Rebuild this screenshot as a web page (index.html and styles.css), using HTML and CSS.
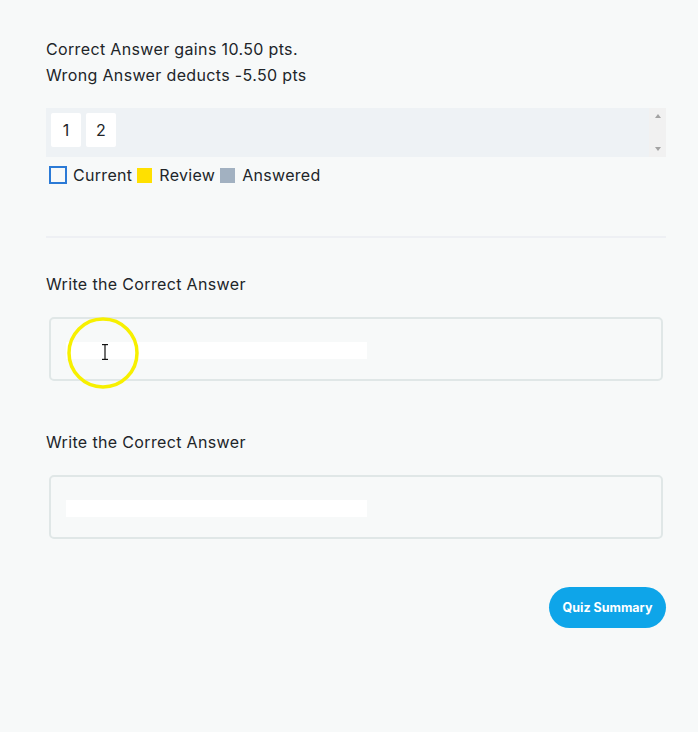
FILE: index.html
```html
<!DOCTYPE html>
<html>
<head>
<meta charset="utf-8">
<link rel="stylesheet" href="styles.css">
</head>
<body>
<div class="page">
  <p class="points">Correct Answer gains 10.50 pts.<br>Wrong Answer deducts -5.50 pts</p>

  <div class="nav-box">
    <div class="nav-items">
      <span class="qnum">1</span>
      <span class="qnum">2</span>
    </div>
    <div class="scrollbar">
      <span class="arrow up"></span>
      <span class="arrow down"></span>
    </div>
  </div>

  <div class="legend">
    <span class="swatch current"></span><span class="legend-label">Current</span>
    <span class="swatch review"></span><span class="legend-label">Review</span>
    <span class="swatch answered"></span><span class="legend-label">Answered</span>
  </div>

  <hr class="divider">

  <div class="question">
    <div class="q-label">Write the Correct Answer</div>
    <div class="answer-box">
      <div class="answer-field"></div>
      <svg class="click-ring" width="76" height="76" viewBox="0 0 76 76">
        <circle cx="38" cy="38" r="34" fill="none" stroke="#f7f000" stroke-width="3.5"/>
        <g stroke="#111" stroke-width="1.2" fill="none">
          <line x1="40" y1="30" x2="40" y2="44"/>
          <line x1="37" y1="29.6" x2="43" y2="29.6"/>
          <line x1="37" y1="44.4" x2="43" y2="44.4"/>
        </g>
      </svg>
    </div>
  </div>

  <div class="question second">
    <div class="q-label">Write the Correct Answer</div>
    <div class="answer-box">
      <div class="answer-field"></div>
    </div>
  </div>

  <div class="actions">
    <button class="summary-btn">Quiz Summary</button>
  </div>
</div>
</body>
</html>
```

FILE: styles.css
```css
html, body {
  margin: 0;
  padding: 0;
  background: #f7f9f9;
}
body {
  font-family: Inter, "Noto Sans", "Liberation Sans", sans-serif;
  font-size: 16px;
  letter-spacing: 0.35px;
  color: #212529;
}
.page {
  width: 620px;
  padding: 36px 0 40px 46px;
}
.points {
  margin: 0;
  line-height: 26px;
}
.nav-box {
  margin-top: 20px;
  height: 49px;
  background: #eef2f5;
  display: flex;
  justify-content: space-between;
}
.nav-items {
  display: flex;
  gap: 5px;
  padding: 5px;
  align-items: flex-start;
}
.qnum {
  width: 30px;
  height: 34px;
  background: #fff;
  border-radius: 2px;
  display: flex;
  align-items: center;
  justify-content: center;
  font-size: 16px;
  letter-spacing: 0;
}
.scrollbar {
  width: 17px;
  background: #f1f1f1;
  display: flex;
  flex-direction: column;
  justify-content: space-between;
  align-items: center;
  padding: 6px 0;
}
.arrow {
  width: 0;
  height: 0;
  border-left: 3.5px solid transparent;
  border-right: 3.5px solid transparent;
}
.arrow.up {
  border-bottom: 4px solid #a3a3a3;
}
.arrow.down {
  border-top: 4px solid #a3a3a3;
}
.legend {
  margin-top: 8px;
  display: flex;
  align-items: center;
  height: 20px;
  line-height: 20px;
  padding-left: 3px;
}
.legend-label {
  letter-spacing: 0.3px;
}
.swatch {
  box-sizing: border-box;
  display: inline-block;
  flex: none;
}
.swatch.current {
  width: 18px;
  height: 18px;
  border: 2px solid #2b7ad6;
  margin-right: 6px;
}
.swatch.review {
  width: 15px;
  height: 15px;
  background: #ffe000;
  margin-left: 5px;
  margin-right: 7px;
}
.swatch.answered {
  width: 15px;
  height: 15px;
  background: #a2b1c1;
  margin-left: 5px;
  margin-right: 7px;
}
.divider {
  margin: 51px 0 0 0;
  border: 0;
  height: 2px;
  background: #eef0f4;
}
.question {
  margin-top: 34px;
}
.question.second {
  margin-top: 49px;
}
.q-label {
  line-height: 24px;
}
.answer-box {
  position: relative;
  margin: 21px 3px 0 3px;
  height: 64px;
  box-sizing: border-box;
  border: 2px solid #e0e7e7;
  border-radius: 5px;
  padding: 23px 15px 0 15px;
}
.answer-field {
  width: 301px;
  height: 17px;
  background: #ffffff;
}
.click-ring {
  position: absolute;
  left: 14px;
  top: -4px;
}
.actions {
  margin-top: 48px;
  display: flex;
  justify-content: flex-end;
}
.summary-btn {
  width: 117px;
  height: 41px;
  border: 0;
  border-radius: 21px;
  background: #0ea5e9;
  color: #fff;
  font-family: Inter, "Noto Sans", "Liberation Sans", sans-serif;
  font-weight: 700;
  font-size: 12.5px;
  letter-spacing: 0;
  padding: 0;
}
```
